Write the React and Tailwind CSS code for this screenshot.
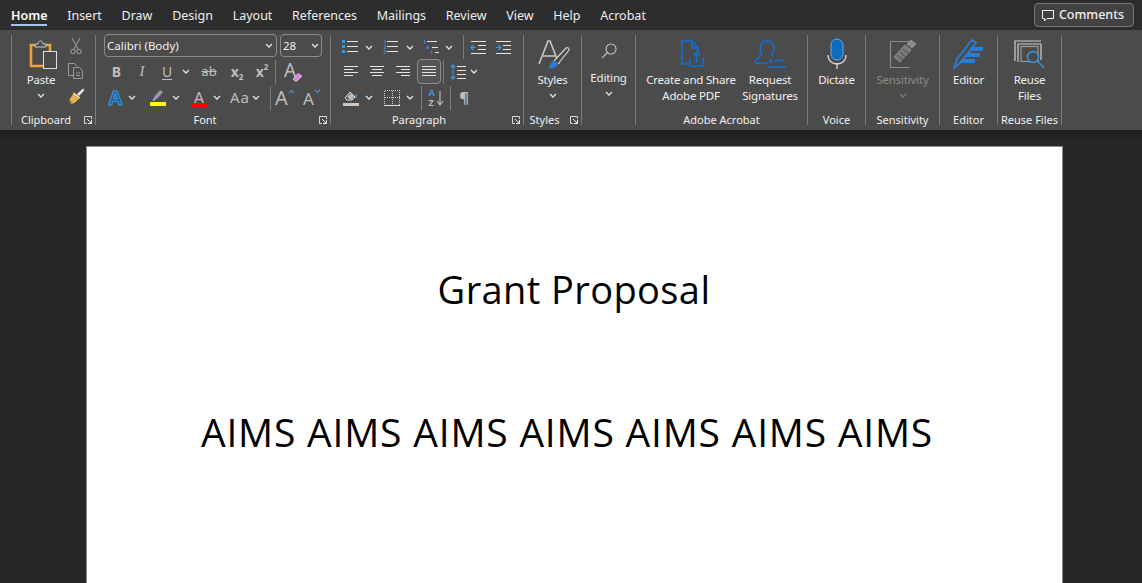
import React from "react";

const G = "#b9b9b9";
const W = "#e4e4e4";
const B = "#3a96dd";
const D = "#0f72dc";

const tabs = ["Home", "Insert", "Draw", "Design", "Layout", "References", "Mailings", "Review", "View", "Help", "Acrobat"];

const Chev = ({ color = "#e6e6e6" }) => (
  <svg width="8" height="5" viewBox="0 0 8 5" fill="none">
    <path d="M1 1l3 3 3-3" stroke={color} strokeWidth="1.3" />
  </svg>
);

const Launcher = () => (
  <svg width="8" height="8" viewBox="0 0 8 8" fill="none" className="absolute right-[3px] bottom-[1px]">
    <path d="M7.5 3V.5H.5v7H3" stroke="#d8d8d8" />
    <path d="M3 3l4 4M7.5 4v3.5H4" stroke="#f0f0f0" />
  </svg>
);

const Sep = ({ className = "" }) => <div className={`w-px h-[24px] bg-[#7b7b7b] shrink-0 ${className}`} />;

const Cell = ({ className = "w-[24px]", children }) => (
  <div className={`flex items-center justify-center shrink-0 h-full ${className}`}>{children}</div>
);

const Lines = ({ rows, w = 16, h = 12, color = W }) => (
  <svg width={w} height={h} viewBox={`0 0 ${w} ${h}`} fill="none" shapeRendering="crispEdges">
    {rows.map((r, i) => (
      <path key={i} d={`M${r[0]} ${r[2]}H${r[1]}`} stroke={color} />
    ))}
  </svg>
);

const Letter = ({ children, className = "" }) => (
  <span className={`leading-none text-[#bdbdbd] ${className}`}>{children}</span>
);

// label sits a bit lower than its box, the separators stop above the ribbon edge
const Group = ({ width, label, launcher, labelClass = "", children }) => (
  <div className={`relative flex flex-col h-[90px] shrink-0 border-r border-[#7b7b7b] ${width}`}>
    <div className="flex-1 min-h-0">{children}</div>
    <div className={`h-[14px] leading-[18px] text-[11px] text-center text-[#f0f0f0] whitespace-nowrap ${labelClass}`}>{label}</div>
    {launcher && <Launcher />}
  </div>
);

const Big = ({ className = "", icon, lines, muted, chev }) => (
  <div className={`flex flex-col items-center shrink-0 ${className}`}>
    <div className="h-[37px] flex items-center justify-center">{icon}</div>
    {lines.map((t) => (
      <div key={t} className={`h-[16px] leading-[16px] text-[11.5px] tracking-[-0.2px] whitespace-nowrap ${muted ? "text-[#8a8a8a]" : "text-[#f0f0f0]"}`}>{t}</div>
    ))}
    {chev && <div className="h-[14px] flex items-center"><Chev color={muted ? "#808080" : "#e6e6e6"} /></div>}
  </div>
);

const Row = ({ className = "h-[25px]", children }) => <div className={`flex items-center ${className}`}>{children}</div>;

function ClipboardGroup() {
  return (
    <Group width="w-[84px]" label="Clipboard" launcher labelClass="pr-[15px]">
      <div className="flex h-full">
        <div className="w-[52px] ml-[3px] flex flex-col items-center">
          <svg width="28" height="31" viewBox="0 0 28 31" fill="none" className="mt-[4px] ml-[4px]">
            <path d="M6 6H2v21h12" stroke="#e8a33d" strokeWidth="2.6" />
            <path d="M17 6h4v6" stroke="#e8a33d" strokeWidth="2.6" />
            <path d="M6 8V5h3c0-4 5-4 5 0h3v3z" stroke="#c8c8c8" fill="#4b4b4b" />
            <rect x="14.500" y="12.500" width="13" height="17" stroke="#e0e0e0" fill="#4b4b4b" />
          </svg>
          <div className="h-[16px] leading-[16px] text-[11.5px] tracking-[-0.2px] mt-[2px] text-[#f0f0f0]">Paste</div>
          <div className="h-[14px] flex items-center"><Chev /></div>
        </div>
        <div className="w-[18px] flex flex-col -mt-px">
          <Row className="h-[24px] justify-center">
            <svg width="12" height="18" viewBox="0 0 12 18" fill="none" stroke="#8f8f8f" strokeWidth="1.2">
              <path d="M2 1l6 11M10 1L4 12" />
              <circle cx="3" cy="14.500" r="2.200" />
              <circle cx="9" cy="14.500" r="2.200" />
            </svg>
          </Row>
          <Row className="h-[25px] justify-center">
            <svg width="16" height="16" viewBox="0 0 16 16" fill="none" stroke="#9a9a9a">
              <path d="M5.500 12.500H.5V.5h6l3 3" />
              <path d="M5.500 4.500h6l3 3v8h-9z" fill="#4b4b4b" />
              <path d="M8 10h4M8 12.500h4" />
            </svg>
          </Row>
          <Row className="h-[25px] justify-center">
            <svg width="17" height="16" viewBox="0 0 17 16" fill="none">
              <path d="M9 6L15 .5l1.500 1.500L11 8z" fill="#e8e8e8" />
              <path d="M6 4.500l6 5-1.500 2-5 4H2l2-2-3 .5 2-2-2 .5z" fill="#e8b04a" />
              <path d="M5.500 5l6.500 5" stroke="#fff" />
            </svg>
          </Row>
        </div>
      </div>
    </Group>
  );
}

function FontGroup() {
  return (
    <Group width="w-[235px]" label="Font" launcher labelClass="pr-[16px]">
      <div className="-mt-px pl-[8px]">
        <div className="flex h-[23px] gap-[3px]">
          <div className="w-[173px] rounded-[4px] border border-[#8c8c8c] flex items-center justify-between pl-[2px] pr-[3px] text-[11.5px] text-[#f0f0f0]">
            <span>Calibri (Body)</span><Chev />
          </div>
          <div className="w-[42px] rounded-[4px] border border-[#8c8c8c] flex items-center justify-between pl-[2px] pr-[2px] text-[11.5px] text-[#f0f0f0]">
            <span>28</span><Chev />
          </div>
        </div>
        <Row className="h-[25px] mt-[2px]">
          <Cell className="w-[25px]"><Letter className="text-[14px] font-bold">B</Letter></Cell>
          <Cell className="w-[26px]"><Letter className="text-[15px] italic font-['Liberation_Serif',serif]">I</Letter></Cell>
          <Cell className="w-[24px]"><Letter className="text-[14px] underline underline-offset-2">U</Letter></Cell>
          <Cell className="w-[14px]"><Chev /></Cell>
          <Cell className="w-[32px]"><Letter className="text-[13px] line-through">ab</Letter></Cell>
          <Cell className="w-[24px]">
            <div className="flex items-end">
              <Letter className="text-[14px] font-bold">x</Letter>
              <Letter className="text-[8px] font-bold text-[#3a96dd] -mb-[2px]">2</Letter>
            </div>
          </Cell>
          <Cell className="w-[26px]">
            <div className="flex items-start">
              <Letter className="text-[14px] font-bold">x</Letter>
              <Letter className="text-[8px] font-bold text-[#3a96dd] -mt-[2px]">2</Letter>
            </div>
          </Cell>
          <Sep />
          <Cell className="w-[28px]">
            <div className="relative flex items-center -mt-[3px]">
              <Letter className="text-[19px] text-[#b0b0b0]">A</Letter>
              <svg width="11" height="10" viewBox="0 0 11 10" className="absolute -right-[7px] -bottom-[2px]">
                <path d="M1 7l5-5.500L10 4 5 9H3z" fill="#d58ad8" stroke="#e9a8ec" />
              </svg>
            </div>
          </Cell>
        </Row>
        <Row className="h-[25px] mt-px">
          <Cell className="w-[24px]">
            <svg width="18" height="18" viewBox="0 0 18 18" className="overflow-visible">
              <text x="1.500" y="16" fontSize="20" fontWeight="700" fill="#1f5f99" stroke={B} strokeWidth="1" fontFamily="Noto Sans">A</text>
            </svg>
          </Cell>
          <Cell className="w-[8px]"><Chev /></Cell>
          <Cell className="w-[24px] ml-[10px]">
            <svg width="16" height="17" viewBox="0 0 16 17" fill="none">
              <path d="M3 11l1-3 6-7 3 2-6 7z" fill="#9a9a9a" />
              <path d="M2 12l2-2 2 1z" fill="#d0d0d0" />
              <rect y="13" width="16" height="4" fill="#ffff00" />
            </svg>
          </Cell>
          <Cell className="w-[8px] ml-[2px]"><Chev /></Cell>
          <Cell className="w-[24px] ml-[7px]">
            <div className="flex flex-col items-center w-[16px]">
              <Letter className="text-[17px] h-[13px] leading-[14px] text-[#b0b0b0]">A</Letter>
              <div className="w-[16px] h-[4px] bg-[#ff0000] mt-px" />
            </div>
          </Cell>
          <Cell className="w-[8px] ml-[2px]"><Chev /></Cell>
          <Cell className="w-[24px] ml-[7px]"><Letter className="text-[15px] tracking-[1px] text-[#a8a8a8]">Aa</Letter></Cell>
          <Cell className="w-[8px]"><Chev /></Cell>
          <Sep className="ml-[10px]" />
          <Cell className="w-[24px] ml-[2px]">
            <div className="flex items-start">
              <Letter className="text-[20px] text-[#b0b0b0]">A</Letter>
              <svg width="7" height="5" viewBox="0 0 7 5" fill="none" className="mt-[1px]">
                <path d="M1 4l2.500-2.500L6 4" stroke={B} strokeWidth="1.2" />
              </svg>
            </div>
          </Cell>
          <Cell className="w-[24px] ml-[3px]">
            <div className="flex items-start">
              <Letter className="text-[17px] mt-[2px] text-[#b0b0b0]">A</Letter>
              <svg width="7" height="5" viewBox="0 0 7 5" fill="none" className="mt-[1px]">
                <path d="M1 1l2.500 2.500L6 1" stroke={B} strokeWidth="1.2" />
              </svg>
            </div>
          </Cell>
        </Row>
      </div>
    </Group>
  );
}

const L = (a, b, y) => [a, b, y];

function ParagraphGroup() {
  return (
    <Group width="w-[193px]" label="Paragraph" launcher labelClass="pr-[16px]">
      <div className="pl-[8px]">
        <Row className="h-[24px]">
          <Cell className="w-[22px]">
            <svg width="16" height="14" viewBox="0 0 16 14" fill="none" shapeRendering="crispEdges">
              <rect width="3" height="3" fill={B} /><rect y="5" width="3" height="3" fill={B} /><rect y="10" width="3" height="3" fill={B} />
              <path d="M5 1.500h11M5 6.500h11M5 11.500h11" stroke={W} />
            </svg>
          </Cell>
          <Cell className="w-[8px] ml-[4px]"><Chev /></Cell>
          <Cell className="w-[22px] ml-[7px]">
            <div className="flex items-center gap-[1px]">
              <div className="flex flex-col text-[5px] leading-[5px] font-bold text-[#3a96dd]">
                <span>1</span><span>2</span><span>3</span>
              </div>
              <Lines rows={[L(0, 11, 1.5), L(0, 11, 6.5), L(0, 11, 11.5)]} w={11} h={14} />
            </div>
          </Cell>
          <Cell className="w-[8px] ml-[4px]"><Chev /></Cell>
          <Cell className="w-[22px] ml-[6px]">
            <svg width="16" height="18" viewBox="0 0 16 18" fill="none">
              <text x="0" y="5.500" fontSize="5.500" fontWeight="700" fill={B} fontFamily="Noto Sans">1</text>
              <text x="3" y="11" fontSize="5.500" fontWeight="700" fill={B} fontFamily="Noto Sans">a</text>
              <text x="8" y="16" fontSize="5.500" fontWeight="700" fill={B} fontFamily="Noto Sans">i</text>
              <path d="M4 3.500h10M9 9h6M12 14.500h4" stroke={W} shapeRendering="crispEdges" />
            </svg>
          </Cell>
          <Cell className="w-[8px] ml-[3px]"><Chev /></Cell>
          <Sep className="ml-[10px]" />
          <Cell className="w-[24px] ml-[2px]">
            <svg width="16" height="13" viewBox="0 0 16 13" fill="none">
              <path d="M1 .5h15M8 4.500h8M8 8.500h8M1 12.500h15" stroke={W} shapeRendering="crispEdges" />
              <path d="M6 6.500H1M3.500 4L1 6.500 3.500 9" stroke={B} strokeWidth="1.2" />
            </svg>
          </Cell>
          <Cell className="w-[24px] ml-px">
            <svg width="16" height="13" viewBox="0 0 16 13" fill="none">
              <path d="M1 .5h15M8 4.500h8M8 8.500h8M1 12.500h15" stroke={W} shapeRendering="crispEdges" />
              <path d="M1 6.500h5M3.500 4L6 6.500 3.500 9" stroke={B} strokeWidth="1.2" />
            </svg>
          </Cell>
        </Row>
        <Row className="h-[25px]">
          <Cell><Lines rows={[L(1, 15, 0.5), L(1, 10, 3.5), L(1, 15, 6.5), L(1, 10, 9.5)]} /></Cell>
          <Cell className="w-[24px] ml-[2px]"><Lines rows={[L(1, 15, 0.5), L(3, 13, 3.5), L(1, 15, 6.5), L(3, 13, 9.5)]} /></Cell>
          <Cell className="w-[24px] ml-[2px]"><Lines rows={[L(1, 15, 0.5), L(6, 15, 3.5), L(1, 15, 6.5), L(6, 15, 9.5)]} /></Cell>
          <Cell className="w-[24px] ml-[2px] rounded-[4px] border border-[#8f8f8f] bg-[#555555]">
            <Lines rows={[L(1, 15, 0.5), L(1, 15, 3.5), L(1, 15, 6.5), L(1, 15, 9.5)]} />
          </Cell>
          <Sep className="ml-[2px]" />
          <Cell className="w-[24px] ml-[2px]">
            <svg width="16" height="16" viewBox="0 0 16 16" fill="none">
              <path d="M7 2.500h9M7 6.500h9M7 10.500h9M7 14.500h9" stroke={W} shapeRendering="crispEdges" />
              <path d="M3 1v14M.8 3.500L3 1l2.200 2.500M.8 12.500L3 15l2.200-2.500" stroke={B} strokeWidth="1.2" />
            </svg>
          </Cell>
          <Cell className="w-[8px]"><Chev /></Cell>
        </Row>
        <Row className="h-[25px] mt-px">
          <Cell>
            <svg width="16" height="18" viewBox="0 0 16 18" fill="none">
              <path d="M2 9l5-6 5 5-3 3H4z" stroke={W} />
              <path d="M4 8l4-4 3 4-3 3z" fill="#bbb" />
              <path d="M13 9V5" stroke={B} strokeWidth="1.5" />
              <rect y="14" width="16" height="3" fill="#c8c8c8" />
            </svg>
          </Cell>
          <Cell className="w-[8px] ml-[2px]"><Chev /></Cell>
          <Cell className="w-[24px] ml-[7px]">
            <svg width="16" height="16" viewBox="0 0 16 16" fill="none" shapeRendering="crispEdges">
              <path d="M.5 .5h15v14M.5 .5v14M8 .5v14M.5 7.500h15" stroke="#c8c8c8" strokeDasharray="1 1" />
              <path d="M0 15.500h16" stroke={W} />
            </svg>
          </Cell>
          <Cell className="w-[8px] ml-[2px]"><Chev /></Cell>
          <Sep className="ml-[7px]" />
          <Cell className="w-[24px] ml-[2px]">
            <div className="flex items-center gap-[1px]">
              <div className="flex flex-col text-[9px] leading-[10px] font-bold">
                <span className="text-[#3a96dd]">A</span>
                <span className="text-[#b9b9b9]">Z</span>
              </div>
              <svg width="8" height="16" viewBox="0 0 8 16" fill="none">
                <path d="M4 1v14M1 11l3 4 3-4" stroke={G} strokeWidth="1.2" />
              </svg>
            </div>
          </Cell>
          <Sep className="ml-[2px]" />
          <Cell className="w-[24px] ml-px"><Letter className="text-[15px] font-bold">¶</Letter></Cell>
        </Row>
      </div>
    </Group>
  );
}

function Ribbon() {
  return (
    <div className="h-[100px] bg-[#4b4b4b] pt-[5px] pl-[11px] flex shrink-0">
      <div className="w-px h-[90px] bg-[#7b7b7b]" />
      <ClipboardGroup />
      <FontGroup />
      <ParagraphGroup />
      <Group width="w-[58px]" label="Styles" launcher labelClass="pr-[16px]">
        <Big
          icon={
            <svg width="32" height="30" viewBox="0 0 32 30" fill="none" className="ml-[3px]">
              <path d="M1 25L10 2h2l9 23M5 17h12" stroke="#c9c9c9" strokeWidth="1.6" />
              <path d="M16 22L28 9c2-1 3 0 3 2L20 25" stroke="#d4d4d4" fill="#4b4b4b" strokeWidth="1.2" />
              <path d="M11 29c1-4 3-7 6-7l3 3c-1 3-5 5-9 4z" fill="#2b7cd3" />
            </svg>
          }
          lines={["Styles"]}
          chev
        />
      </Group>
      <Group width="w-[54px]" label="">
        <div className="flex flex-col items-center">
          <div className="h-[32px] flex items-center justify-center">
            <svg width="18" height="18" viewBox="0 0 18 18" fill="none" stroke="#c4c4c4" strokeWidth="1.1">
              <circle cx="11" cy="7" r="5" />
              <path d="M7.500 10.500L2 16" />
            </svg>
          </div>
          <div className="h-[16px] leading-[16px] text-[11.5px] tracking-[-0.2px] mt-[3px] text-[#f0f0f0]">Editing</div>
          <div className="h-[14px] flex items-center"><Chev /></div>
        </div>
      </Group>
      <Group width="w-[172px]" label="Adobe Acrobat">
        <div className="flex pl-[8px]">
          <Big
            className="w-[94px]"
            icon={
              <svg width="24" height="28" viewBox="0 0 24 28" fill="none" stroke={D} strokeWidth="1.6" className="ml-[1px]">
                <path d="M9 24H2V1h10l6 7v4" />
                <path d="M12 1v7h6" />
                <path d="M10 18v8h13v-8M16.500 23v-10M13 16l3.500-3.500L20 16" />
              </svg>
            }
            lines={["Create and Share", "Adobe PDF"]}
          />
          <Big
            className="w-[64px]"
            icon={
              <svg width="32" height="29" viewBox="0 0 32 29" fill="none" stroke={D} strokeWidth="1.5">
                <path d="M1 24c0-5 7-6 7-9-3-3-3-13 5-13s8 9 5 13l1 3" />
                <path d="M1 24h13" />
                <path d="M15 20l3 4M18 20l-3 4M21 23c2-3 2-3 3-1 1-2 2-2 3 0l3-1" strokeWidth="1.2" />
                <path d="M14 28h18" strokeWidth="1.6" />
              </svg>
            }
            lines={["Request", "Signatures"]}
          />
        </div>
      </Group>
      <Group width="w-[58px]" label="Voice">
        <Big
          icon={
            <svg width="20" height="31" viewBox="0 0 20 31" fill="none">
              <rect x="4" y="1" width="12" height="21" rx="6" fill="#0f6cbd" stroke="#6aa9e0" />
              <path d="M1 17c0 12 18 12 18 0" stroke="#d8d8d8" strokeWidth="1.3" />
              <path d="M10 25v6" stroke="#d8d8d8" strokeWidth="1.3" />
            </svg>
          }
          lines={["Dictate"]}
        />
      </Group>
      <Group width="w-[74px]" label="Sensitivity">
        <Big
          muted
          chev
          icon={
            <svg width="28" height="30" viewBox="0 0 28 30" fill="none" stroke="#8c8c8c">
              <path d="M21 28.500H1.500V2.500H21" strokeWidth="1.2" />
              <path d="M5 18L16 6l6 5-11 12z" fill="#7a7a7a" />
              <path d="M8 16l6 5M11 13l6 5M14 10l6 5" stroke="#4b4b4b" />
              <path d="M18 5l4-4 5 4-4 4z" fill="#8c8c8c" />
            </svg>
          }
          lines={["Sensitivity"]}
        />
      </Group>
      <Group width="w-[58px]" label="Editor">
        <Big
          icon={
            <svg width="31" height="31" viewBox="0 0 31 31" fill="none">
              <path d="M1 30l3-9L19 2l4 3L7 25z" stroke="#2b7cd3" strokeWidth="1.8" />
              <path d="M18 9h12v4H16zM14 15h13v4H11zM9 21h13v4H7z" fill="#2b7cd3" />
            </svg>
          }
          lines={["Editor"]}
        />
      </Group>
      <Group width="w-[64px]" label="Reuse Files">
        <Big
          icon={
            <svg width="31" height="28" viewBox="0 0 31 28" fill="none">
              <path d="M1 21V1h26" stroke="#d0d0d0" strokeWidth="1.2" />
              <path d="M4 22V4h23v16" stroke="#d0d0d0" strokeWidth="1.2" />
              <rect x="7" y="6.500" width="17" height="15" stroke="#9a9a9a" strokeWidth="1.2" />
              <circle cx="19" cy="17" r="5.500" stroke={B} strokeWidth="1.4" fill="#4b4b4b" />
              <path d="M23 21l7 6.500" stroke={B} strokeWidth="1.4" />
            </svg>
          }
          lines={["Reuse", "Files"]}
        />
      </Group>
    </div>
  );
}

export default function App() {
  return (
    <div className="h-[583px] w-[1142px] flex flex-col overflow-hidden bg-[#272727] font-['Noto_Sans',sans-serif]">
      <div className="h-[30px] bg-[#2d2d2d] flex items-start justify-between pl-[11px] pr-[8px] shrink-0">
        <div className="flex gap-[19.7px]">
          {tabs.map((t, i) => (
            <div key={t} className={`relative h-[30px] leading-[31px] text-[12.5px] ${i === 0 ? "font-semibold text-white" : "text-[#eeeeee]"}`}>
              {t}
              {i === 0 && <div className="absolute left-0 right-0 bottom-[4px] h-[2px] bg-[#a9c2ea]" />}
            </div>
          ))}
        </div>
        <div className="mt-[3px] w-[100px] h-[24px] pt-px pr-[2px] rounded-[4px] border border-[#787878] bg-[#424242] flex items-center justify-center gap-[5px] text-[12.5px] font-medium text-[#f0f0f0]">
          <svg width="12" height="12" viewBox="0 0 12 12" fill="none" stroke="#f0f0f0">
            <path d="M.5 .5h11v8H5L2.500 11V8.500h-2z" />
          </svg>
          Comments
        </div>
      </div>
      <Ribbon />
      <div className="flex-1 min-h-0 pt-[16px] pl-[86px] bg-gradient-to-b from-[#1f1f1f] to-[#272727] to-[12px]">
        <div className="w-[977px] h-[500px] bg-white border-x border-t border-[#8c8c8c] flex flex-col items-center text-black font-['Open_Sans',sans-serif] text-[38px] leading-[52px]">
          <div className="mt-[116px] pr-px tracking-[0.4px]">Grant Proposal</div>
          <div className="mt-[91px] pr-[15px] whitespace-nowrap text-[39px] tracking-[0.8px]">AIMS AIMS AIMS AIMS AIMS AIMS AIMS</div>
        </div>
      </div>
    </div>
  );
}
